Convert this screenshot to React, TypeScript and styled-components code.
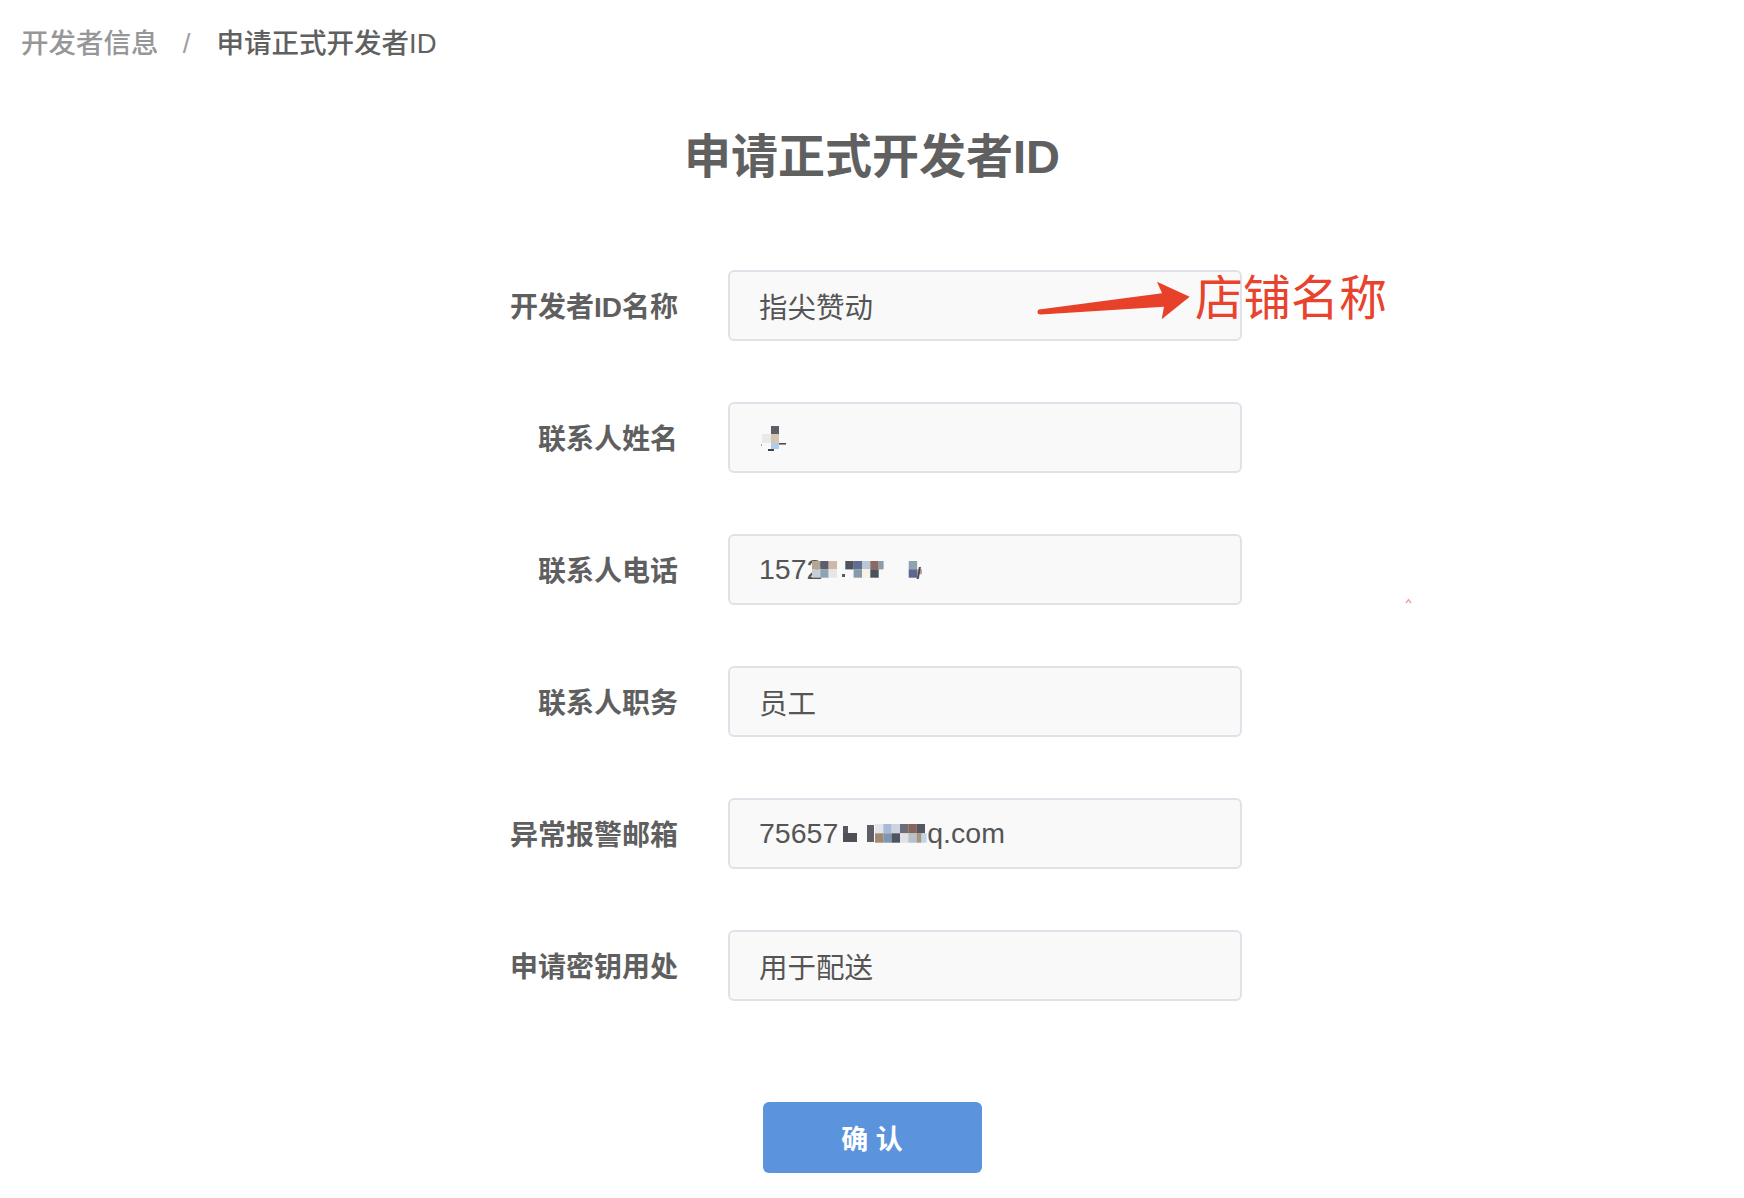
import React from 'react';
import styled, { createGlobalStyle } from 'styled-components';

const GlobalStyle = createGlobalStyle`
  html, body {
    margin: 0;
    padding: 0;
    background: #ffffff;
  }
  body {
    font-family: "Liberation Sans", "Noto Sans CJK SC", sans-serif;
    color: #606060;
  }
`;

interface Block {
  x: number;
  y: number;
  w: number;
  h: number;
  c: string;
}

const nameBlocks: Block[] = [
  { x: 12, y: 1, w: 8, h: 8, c: '#5c5f64' },
  { x: 3, y: 9, w: 9, h: 9, c: '#e9e9e9' },
  { x: 12, y: 9, w: 8, h: 9, c: '#d6c6b0' },
  { x: 12, y: 18, w: 8, h: 6, c: '#b3cbea' },
  { x: 20, y: 18, w: 7, h: 1.6, c: '#4a4d55' },
  { x: 9, y: 24, w: 6, h: 2, c: '#3f434b' },
  { x: 2, y: 19, w: 1, h: 2, c: '#d89060' },
];

const phoneBlocks: Block[] = [
  { x: 0, y: 0, w: 8.4, h: 8.4, c: '#b5a690' },
  { x: 8.3, y: 0, w: 8.4, h: 8.4, c: '#5b5f6b' },
  { x: 16.6, y: 0, w: 8.4, h: 8.4, c: '#cfb8a8' },
  { x: 33.3, y: 0, w: 8.4, h: 8.4, c: '#4e535e' },
  { x: 41.6, y: 0, w: 8.4, h: 8.4, c: '#5e6d90' },
  { x: 50, y: 0, w: 8.4, h: 8.4, c: '#b8c6d8' },
  { x: 58.3, y: 0, w: 8.4, h: 8.4, c: '#8a6a62' },
  { x: 66.6, y: 0, w: 5, h: 8.4, c: '#8e9cac' },
  { x: 0, y: 8.3, w: 8.4, h: 8.4, c: '#c4cfd8' },
  { x: 8.3, y: 8.3, w: 8.4, h: 8.4, c: '#8fa3b1' },
  { x: 16.6, y: 8.3, w: 8.4, h: 8.4, c: '#e6e6e6' },
  { x: 30, y: 13, w: 3, h: 3, c: '#555a62' },
  { x: 41.6, y: 8.3, w: 8.4, h: 8.4, c: '#8899aa' },
  { x: 50, y: 8.3, w: 8.4, h: 8.4, c: '#f6f2e6' },
  { x: 58.3, y: 8.3, w: 8.4, h: 8.4, c: '#4c515b' },
  { x: 96.7, y: 0, w: 8.4, h: 8.4, c: '#8ea3b0' },
  { x: 96.7, y: 8.3, w: 8.4, h: 8.4, c: '#5a6790' },
  { x: 105, y: 8.3, w: 5, h: 5, c: '#c4a89a' },
];

const emailBlocks: Block[] = [
  { x: 0, y: 2, w: 5, h: 7, c: '#58585c' },
  { x: 0, y: 9, w: 14, h: 9, c: '#4f4f55' },
  { x: 24, y: 1, w: 7, h: 17, c: '#5e5e66' },
  { x: 32, y: 0, w: 8.4, h: 9.4, c: '#e2e6ec' },
  { x: 32, y: 9.3, w: 8.4, h: 9.4, c: '#a08a72' },
  { x: 40.3, y: 0, w: 8.4, h: 9.4, c: '#a9b9d8' },
  { x: 40.3, y: 9.3, w: 8.4, h: 9.4, c: '#7f97ae' },
  { x: 48.6, y: 0, w: 8.4, h: 9.4, c: '#cdd3e0' },
  { x: 48.6, y: 9.3, w: 8.4, h: 9.4, c: '#4f5560' },
  { x: 57, y: 0, w: 8.4, h: 9.4, c: '#6b6e74' },
  { x: 57, y: 9.3, w: 8.4, h: 9.4, c: '#e2e2e2' },
  { x: 65.3, y: 0, w: 8.4, h: 9.4, c: '#8a625c' },
  { x: 65.3, y: 9.3, w: 8.4, h: 9.4, c: '#b8c0c8' },
  { x: 73.6, y: 0, w: 8.4, h: 9.4, c: '#55575e' },
  { x: 73.6, y: 9.3, w: 5, h: 9.4, c: '#a89684' },
  { x: 78.6, y: 9.3, w: 5, h: 9.4, c: '#bcd6ea' },
];

const Page = styled.div`
  min-height: 1198px;
  display: flex;
  flex-direction: column;
`;

const Breadcrumb = styled.div`
  display: flex;
  align-items: center;
  padding: 24px 0 0 21px;
  height: 40px;
  font-size: 27.5px;
  line-height: 40px;
  font-weight: 500;
`;

const CrumbLink = styled.span`
  color: #979797;
`;

const CrumbSep = styled.span`
  display: inline-block;
  width: 12px;
  margin: 0 24px 0 22px;
  text-align: center;
  color: #a0a0a0;
`;

const CrumbCurrent = styled.span`
  color: #606060;
`;

const Title = styled.h1`
  margin: 63px 0 0;
  height: 60px;
  line-height: 60px;
  font-size: 47px;
  font-weight: 700;
  color: #606060;
  text-align: center;
`;

const Form = styled.div`
  margin: 83px auto 0;
  width: 740px;
  display: grid;
  grid-template-columns: 176px 514px;
  grid-auto-rows: 70px;
  column-gap: 50px;
  row-gap: 62px;
`;

const Label = styled.div`
  display: flex;
  align-items: center;
  justify-content: flex-end;
  font-size: 28px;
  font-weight: 700;
  color: #5f5f5f;
  white-space: nowrap;
`;

const FieldCell = styled.div`
  position: relative;
`;

const FieldBox = styled.div`
  box-sizing: border-box;
  height: 71px;
  display: flex;
  align-items: center;
  padding-left: 29px;
  background: #f9f9f9;
  border: 2px solid #dfe2e8;
  border-radius: 6px;
  font-size: 28.5px;
  color: #555555;
  white-space: nowrap;
`;

const MosaicSvg = styled.svg<{ $offset: number }>`
  display: block;
  flex: none;
  margin-left: ${(p) => p.$offset}px;
`;

const SlashMark = styled.span`
  margin-left: -6px;
  margin-top: 8px;
  font-size: 16px;
  font-weight: 700;
  color: #3f4450;
`;

const Arrow = styled.svg`
  position: absolute;
  left: 301px;
  top: 10px;
`;

const Annotation = styled.div`
  position: absolute;
  left: 467px;
  top: 0;
  font-family: "Noto Sans CJK SC", sans-serif;
  font-size: 48px;
  line-height: 48px;
  font-weight: 400;
  color: #e8432d;
  white-space: nowrap;
`;

const Speck = styled.svg`
  position: absolute;
  left: 677px;
  top: 64px;
`;

const SubmitButton = styled.button`
  display: block;
  margin: 102px auto 0;
  width: 219px;
  height: 71px;
  border: none;
  border-radius: 6px;
  background: #5b93dd;
  color: #ffffff;
  font-family: "Liberation Sans", "Noto Sans CJK SC", sans-serif;
  font-size: 27px;
  font-weight: 700;
  cursor: pointer;
`;

const Mosaic: React.FC<{ blocks: Block[]; width: number; height: number; offset?: number }> = ({
  blocks,
  width,
  height,
  offset = 0,
}) => (
  <MosaicSvg width={width} height={height} viewBox={`0 0 ${width} ${height}`} $offset={offset}>
    {blocks.map((b, i) => (
      <rect key={i} x={b.x} y={b.y} width={b.w} height={b.h} fill={b.c} />
    ))}
  </MosaicSvg>
);

const getFields = (): { label: string; value: React.ReactNode }[] => [
  { label: '开发者ID名称', value: <span>指尖赞动</span> },
  { label: '联系人姓名', value: <Mosaic blocks={nameBlocks} width={28} height={26} /> },
  {
    label: '联系人电话',
    value: (
      <>
        <span>1572</span>
        <Mosaic blocks={phoneBlocks} width={110} height={17} offset={-10} />
        <SlashMark>/</SlashMark>
      </>
    ),
  },
  { label: '联系人职务', value: <span>员工</span> },
  {
    label: '异常报警邮箱',
    value: (
      <>
        <span>75657</span>
        <Mosaic blocks={emailBlocks} width={84} height={19} offset={5} />
        <span>q.com</span>
      </>
    ),
  },
  { label: '申请密钥用处', value: <span>用于配送</span> },
];

export default function App() {
  const fields = getFields();
  return (
    <Page>
      <GlobalStyle />
      <Breadcrumb>
        <CrumbLink>开发者信息</CrumbLink>
        <CrumbSep>/</CrumbSep>
        <CrumbCurrent>申请正式开发者ID</CrumbCurrent>
      </Breadcrumb>

      <Title>申请正式开发者ID</Title>

      <Form>
        {fields.map((f, i) => (
          <React.Fragment key={f.label}>
            <Label>{f.label}</Label>
            <FieldCell>
              <FieldBox>{f.value}</FieldBox>
              {i === 0 && (
                <>
                  <Arrow width="170" height="45" viewBox="0 0 170 45">
                    <path
                      d="M10 29.5 L133 13.3 L128 1.7 L160.7 16.7 L132.7 39.3 L135 26.7 L11.7 34.5 Q8.5 34.5 8.5 32 Q8.5 29.7 10 29.5 Z"
                      fill="#e8412a"
                    />
                  </Arrow>
                  <Annotation>店铺名称</Annotation>
                </>
              )}
              {i === 2 && (
                <Speck width="8" height="6" viewBox="0 0 8 6">
                  <path d="M1 5 L3.5 1.5 L6 5" stroke="#f2a093" strokeWidth="1.3" fill="none" />
                </Speck>
              )}
            </FieldCell>
          </React.Fragment>
        ))}
      </Form>

      <SubmitButton type="button">确 认</SubmitButton>
    </Page>
  );
}
